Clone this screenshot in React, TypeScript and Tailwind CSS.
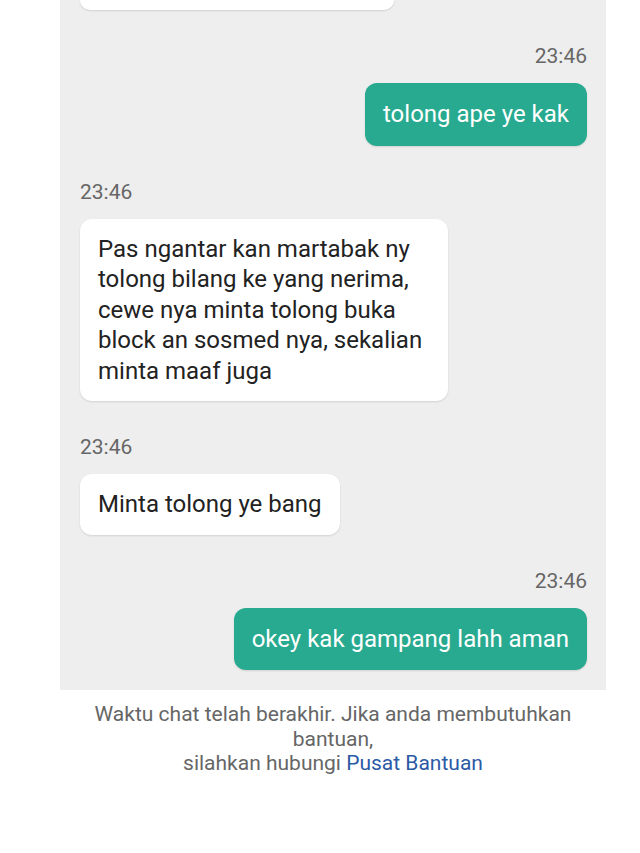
import React from 'react'

type Message = {
  id: number
  time: string
  text: string
  mine: boolean
}

const messages: Message[] = [
  { id: 1, time: '23:46', text: 'tolong ape ye kak', mine: true },
  {
    id: 2,
    time: '23:46',
    text: 'Pas ngantar kan martabak ny tolong bilang ke yang nerima, cewe nya minta tolong buka block an sosmed nya, sekalian minta maaf juga',
    mine: false
  },
  { id: 3, time: '23:46', text: 'Minta tolong ye bang', mine: false },
  { id: 4, time: '23:46', text: 'okey kak gampang lahh aman', mine: true }
]

function ChatBubble({ message }: { message: Message }) {
  return (
    <div
      className={`flex flex-col ${message.mine ? 'items-end' : 'items-start'}`}
    >
      <p className="text-[21px] leading-[24px] text-[#666666]">
        {message.time}
      </p>
      <div
        className={
          message.mine
            ? 'mt-[15px] max-w-[368px] rounded-xl bg-[#27aa8f] px-[18px] py-4 text-[24px] leading-[30.5px] text-white shadow-[0_1px_2px_rgba(0,0,0,0.12)]'
            : 'mt-[15px] max-w-[368px] rounded-xl bg-white px-[18px] py-[15px] text-[24px] leading-[30.5px] text-[#222222] shadow-[0_1px_2px_rgba(0,0,0,0.12)]'
        }
      >
        {message.text}
      </div>
    </div>
  )
}

export default function App() {
  return (
    <div
      className="h-[853px] w-[640px] overflow-hidden bg-white"
      style={{ fontFamily: 'Roboto, "Noto Sans", sans-serif' }}
    >
      <div className="ml-[60px] w-[546px]">
        <div className="flex flex-col gap-[34px] bg-[#eeeeee] pb-5 pl-5 pr-[19px]">
          {/* previous bubble, scrolled off the top */}
          <div className="h-[10px] w-[314px] rounded-b-xl bg-white shadow-[0_1px_2px_rgba(0,0,0,0.12)]" />
          {messages.map((m) => (
            <ChatBubble key={m.id} message={m} />
          ))}
        </div>
        <p className="mx-auto mt-[12px] w-[520px] text-center text-[21px] leading-[24.5px] text-[#666666]">
          Waktu chat telah berakhir. Jika anda membutuhkan bantuan,
          <br />
          silahkan hubungi <span className="text-[#2b5aa6]">Pusat Bantuan</span>
        </p>
      </div>
    </div>
  )
}
